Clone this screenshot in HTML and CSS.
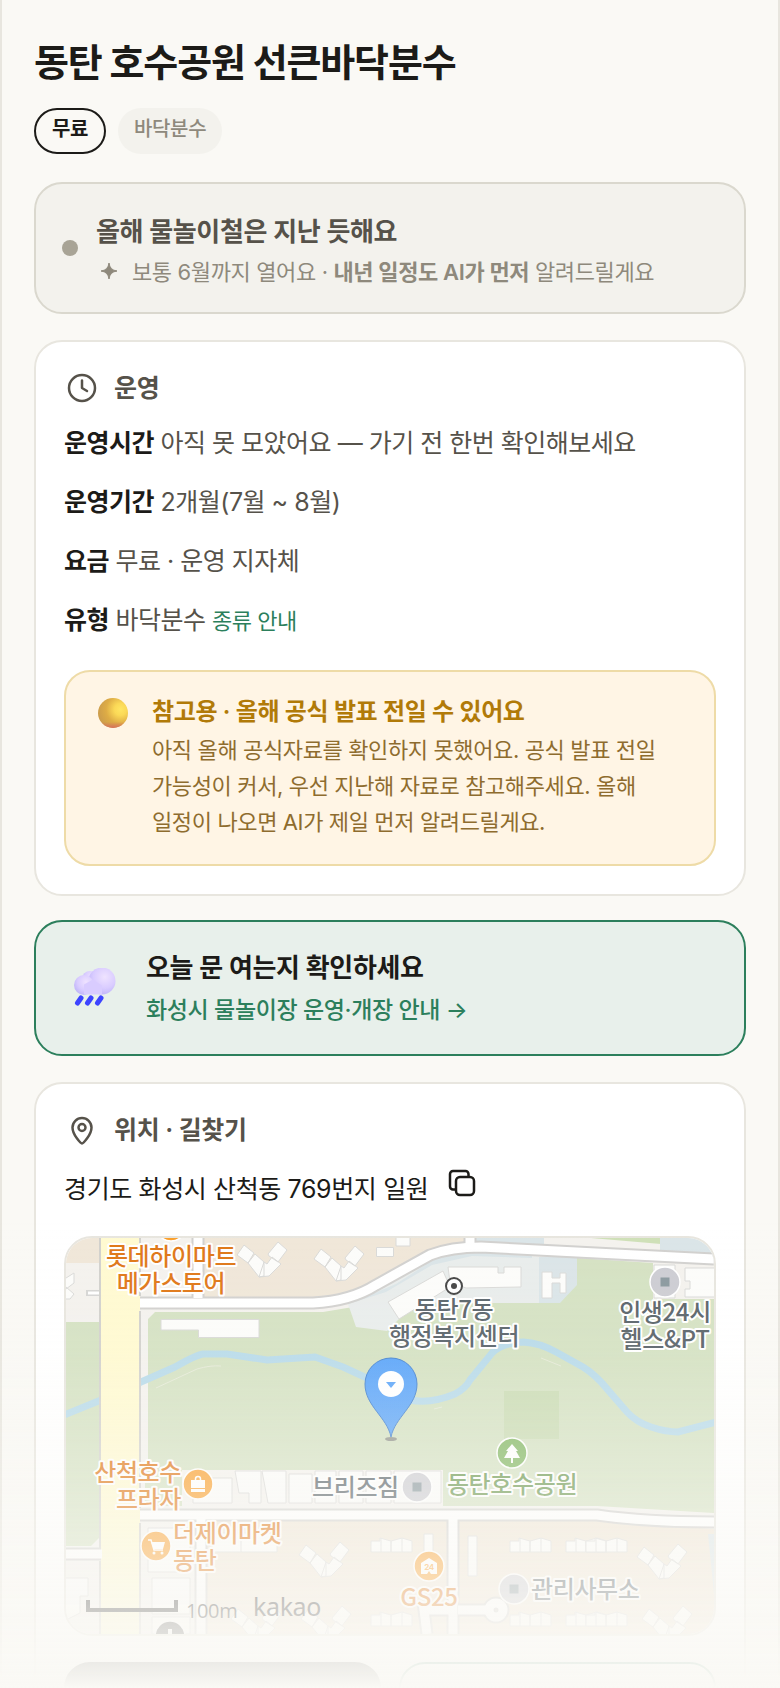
FILE: index.html
```html
<!DOCTYPE html>
<html lang="ko">
<head>
  <meta charset="UTF-8">
  <title>동탄 호수공원 선큰바닥분수</title>
  <meta name="viewport" content="width=device-width, initial-scale=1.0">
  <link rel="stylesheet" href="styles.css">
</head>
<body>
  <main class="app">
    <h1 class="title">동탄 호수공원 선큰바닥분수</h1>
    <div class="chips">
      <span class="chip chip-free">무료</span>
      <span class="chip">바닥분수</span>
    </div>

    <section class="status">
      <span class="status-dot"></span>
      <div class="status-body">
        <p class="status-title">올해 물놀이철은 지난 듯해요</p>
        <p class="status-sub">
          <svg class="spark" viewBox="0 0 16 16" aria-hidden="true"><path d="M8 0Q8.800 7.200 16 8Q8.800 8.800 8 16Q7.200 8.800 0 8Q7.200 7.200 8 0Z" fill="currentColor" stroke="currentColor"/></svg>
          <span>보통 6월까지 열어요 · <b>내년 일정도 AI가 먼저</b> 알려드릴게요</span>
        </p>
      </div>
    </section>

    <section class="card">
      <h2 class="card-head">
        <svg class="head-icon" viewBox="0 0 36 36" aria-hidden="true"><circle cx="18" cy="18" r="13"/><path d="M18 10.500V18l5 3"/></svg>
        운영
      </h2>
      <div class="rows">
        <p class="row"><b>운영시간</b> 아직 못 모았어요 — 가기 전 한번 확인해보세요</p>
        <p class="row"><b>운영기간</b> 2개월(7월 ~ 8월)</p>
        <p class="row"><b>요금</b> 무료 · 운영 지자체</p>
        <p class="row"><b>유형</b> 바닥분수 <a href="#">종류 안내</a></p>
      </div>
      <div class="notice">
        <svg class="ball" viewBox="0 0 30 30" aria-hidden="true">
          <defs>
            <radialGradient id="ball" cx=".75" cy=".38" r=".8"><stop offset="0" stop-color="#ffe562"/><stop offset=".25" stop-color="#fbd957"/><stop offset=".6" stop-color="#deac45"/><stop offset="1" stop-color="#c99a4c"/></radialGradient>
            <linearGradient id="ballEdge" x1="0" y1="0" x2="0" y2="1"><stop offset=".8" stop-color="#d8705c" stop-opacity="0"/><stop offset="1" stop-color="#d8705c"/></linearGradient>
          </defs>
          <circle cx="15" cy="15" r="15" fill="url(#ball)"/><circle cx="15" cy="15" r="15" fill="url(#ballEdge)"/>
        </svg>
        <div>
          <p class="notice-title">참고용 · 올해 공식 발표 전일 수 있어요</p>
          <p class="notice-text">아직 올해 공식자료를 확인하지 못했어요. 공식 발표 전일 가능성이 커서, 우선 지난해 자료로 참고해주세요. 올해 일정이 나오면 AI가 제일 먼저 알려드릴게요.</p>
        </div>
      </div>
    </section>

    <a class="check" href="#">
      <svg class="cloud" viewBox="-1 3 44 44" aria-hidden="true">
        <defs>
          <radialGradient id="puff" cx=".6" cy=".35" r=".7"><stop offset="0" stop-color="#efe3ff"/><stop offset=".6" stop-color="#d9ccff"/><stop offset="1" stop-color="#bdb2f8"/></radialGradient>
        </defs>
        <g fill="url(#puff)"><circle cx="17" cy="14" r="8"/><circle cx="29" cy="16" r="13.500"/><circle cx="11" cy="20" r="10"/></g>
        <path d="M11 29.500h18v-9l-9-6-9 5z" fill="#d9ccff"/>
        <path d="M8 33l-3.500 5M18 33l-3.500 5M28 33l-3.500 5" stroke="#3d44ff" stroke-width="5" stroke-linecap="round"/>
      </svg>
      <span>
        <strong class="check-title">오늘 문 여는지 확인하세요</strong>
        <span class="check-link">화성시 물놀이장 운영·개장 안내 →</span>
      </span>
    </a>

    <section class="card place">
      <h2 class="card-head">
        <svg class="head-icon" viewBox="0 0 36 36" aria-hidden="true"><path d="M18 31.500c-1 0-9.500-8.500-9.500-16a9.500 9.500 0 0 1 19 0c0 7.500-8.500 16-9.500 16z"/><circle cx="18" cy="15.500" r="3.500"/></svg>
        위치 · 길찾기
      </h2>
      <div class="address">
        <span>경기도 화성시 산척동 769번지 일원</span>
        <button type="button" class="copy" aria-label="복사">
          <svg viewBox="0 0 28 28" aria-hidden="true"><rect x="8" y="8" width="18" height="18" rx="4"/><path d="M8 20.500H5a3 3 0 0 1-3-3V5a3 3 0 0 1 3-3h12.500a3 3 0 0 1 3 3v3"/></svg>
        </button>
      </div>

      <div class="map">
        <svg viewBox="0 0 648 396" preserveAspectRatio="xMidYMid slice" role="img" aria-label="지도">
          <defs>
            <g id="tower" class="bldg"><path d="M0 15L7 5l10 8-6 10zM11 23l7-9 9 8v14l-5 1zM22 37l5-15 3 2 5-7 9 7-12 12zM31 14l10-12 9 8-9 12-9-6z"/></g>
            <g id="block" class="bldg"><path d="M0 5h9V2l11 3v11H0zM10 2v14M20 5l11-3 10 3v11H20zM31 2v14"/></g>
            <linearGradient id="pin" x1="0" y1="0" x2="0" y2="1"><stop offset="0" stop-color="#5ba5fa"/><stop offset="1" stop-color="#62a8f8"/></linearGradient>
          </defs>

          <!-- land -->
          <rect width="648" height="396" fill="#f4f2ee"/>
          <path d="M0 0h34v25H0zM138 0h261v7L364 14 314 44 284 55 247 59H138z" fill="#f0e7d9"/>
          <path d="M141 283H531L648 291V396H141z" fill="#f0e6d6"/>
          <path d="M82 81l7-7H257l30-5L511 20 587 25V61H648V275L531 268H377V232H82z" fill="#d5e2c3"/>
          <path d="M0 84H33V300l-8 8H0zM79 232h37v36H79z" fill="#d5e2c3"/>
          <path d="M525 0h70v6z" fill="#cfe0b8"/>
          <path d="M282 66l40-20 44-26 40-6 67 5v46H349l-28 28-31-4z" fill="#e9edec"/>
          <path d="M410 0h68v10h-68zM473 19h38v28L494 65H473zM594 0h54v18l-54-4zM282 66l48-20 40-26 36-6 60 4v2l-60-2-40 9-46 27z" fill="#dbe5e8"/>
          <path d="M438 153h55v48h-55z" fill="#cbdcb5"/>
          <path d="M642 296h6v60z" fill="#dbe5e8"/>

          <!-- stream -->
          <path class="stream" d="M-2 177L35 162 75 144 109 129Q130 117 137 116H161L201 122 249 119 277 129 301 140Q330 160 344 162Q365 166 389 156Q400 150 404 142L426 115Q436 105 457 104Q474 105 490 114L517 129Q530 137 542 152L561 174Q570 184 585 189Q600 194 612 194L650 184"/>
          <path d="M90 150L131 131Q145 127 155 128M475 120l20 8M368 171l8-2" fill="none" stroke="#e6ebd8"/>

          <!-- roads -->
          <g class="road-edge">
            <path d="M73 65H247Q285 63 310 47L364 17Q385 9 415 9L648 21"/>
            <path d="M73 277H531Q580 284 648 284M0 316H36M135 280V396M387 280V396M392 372H420M387 372H358L361 396M132-2V60M404-2V8"/>
            <circle cx="430" cy="372" r="7"/>
          </g>
          <path d="M20 55H36" stroke="#d6d6d4" stroke-width="6"/><path d="M22 55H36" stroke="#fff" stroke-width="3"/>
          <path d="M35 0H74V396H35z" fill="#fffad1"/>
          <path d="M34 0V310M34 323V396M74 0V58M74 73V270M74 285V396" stroke="#d2d1cd" stroke-width="2"/>
          <g class="road">
            <path d="M74 65H247Q285 63 310 47L364 17Q385 9 415 9L648 21"/>
            <path d="M74 277H531Q580 284 648 284M0 316H36M135 280V396M387 280V396M392 372H420M387 372H358L361 396M132-2V60M404-2V8"/>
            <circle cx="430" cy="372" r="7"/>
          </g>

          <!-- buildings -->
          <g class="bldg">
            <path d="M95 81.500H193V99.500H132.500V92H95zM310.500 9.500h17v9h-17zM330-2h14v10h-14zM0 40l8-5 0 10-8 6M0 49l8 7-4 5H0"/>
            <path d="M322 64L377 33 384 49 333 81zM382 29h50v6h6v-6h17v20l-55 1-16-6z"/>
            <path d="M476 34h10v6h8v-5h6v20h-6v-10h-8v15h-10zM588 27h21v33h-21zM619 30h30v29h-30v-8h5v-8h-5z"/>
            <path d="M127 240H166V265H127zM169 233H195V265H183V255h-10zM196 233H220V265H202zM223 236H246V265H223zM249 233H270V265H249zM273 233H297V265H273zM300 233H325V265H300zM328 233H375V265H328z"/>
            <path d="M82 290H124V334H82zM86 340H124V376H86zM86 379H124V396H86zM146 295H211V314H146zM175 296v18M0 340H22V358H14V375L0 382M358 296h9v20h-9zM402 298h9v40h-9z"/>
          </g>
          <use href="#tower" x="171" y="2"/><use href="#tower" x="248" y="6"/>
          <use href="#tower" x="233" y="302"/><use href="#tower" x="571" y="304"/><use href="#tower" x="165" y="366"/><use href="#tower" x="235" y="366"/><use href="#tower" x="576" y="366"/>
          <use href="#block" x="305" y="298"/><use href="#block" x="444" y="298"/><use href="#block" x="500" y="298"/><use href="#block" x="520" y="298"/>
          <use href="#block" x="305" y="372"/><use href="#block" x="444" y="372"/><use href="#block" x="500" y="372"/><use href="#block" x="520" y="372"/>

          <!-- markers -->
          <g stroke="#fff" stroke-width="1.500">
            <g fill="#fa9f2c"><circle cx="105" cy="-12" r="15"/><circle cx="132" cy="246" r="15"/><circle cx="90" cy="308" r="15"/><circle cx="363" cy="328" r="15"/></g>
            <g fill="#cdcdd3"><circle cx="599" cy="44" r="15"/><circle cx="351" cy="249" r="15"/><circle cx="448" cy="351" r="15"/></g>
            <circle cx="446" cy="215" r="15" fill="#84b865"/>
            <circle cx="104" cy="398" r="15" fill="#555"/>
          </g>
          <path d="M594.500 39.500h9v9h-9zM346.500 244.500h9v9h-9zM443.500 346.500h9v9h-9z" fill="#8b999f"/>
          <path d="M446 206l6 7h-2l4 7h-7v5h-2v-5h-7l4-7h-2zM125 242h14v8h-14zM125 251h14v3h-14zM355 325l8-5 8 5v11h-6l-2-3-2 3h-6zM102 391h4v5h-4z" fill="#fff"/>
          <path d="M129.500 242v-1a2.500 2.500 0 0 1 5 0v1M82 302h3l3 10h9" fill="none" stroke="#fff" stroke-width="1.500"/>
          <path d="M85 304h14l-2 7H88z" fill="#fff"/><circle cx="88" cy="315" r="1.500" fill="#fff"/><circle cx="96" cy="315" r="1.500" fill="#fff"/>
          <text x="363" y="332" class="tiny">24</text>
          <circle cx="388" cy="48" r="8" fill="#fff" stroke="#444" stroke-width="2"/><circle cx="388" cy="48" r="3" fill="#444"/>

          <!-- names -->
          <g class="name shop">
            <text x="105" y="27" class="mid">롯데하이마트</text><text x="105" y="54" class="mid">메가스토어</text>
            <text x="115" y="243" class="end">산척호수</text><text x="115" y="270" class="end">프라자</text>
            <text x="107" y="304">더제이마켓</text><text x="107" y="331">동탄</text>
            <text x="363" y="368" class="mid">GS25</text>
          </g>
          <g class="name">
            <text x="388" y="80" class="mid">동탄7동</text><text x="388" y="107" class="mid">행정복지센터</text>
            <text x="599" y="83" class="mid">인생24시</text><text x="599" y="110" class="mid">헬스&amp;PT</text>
            <text x="246" y="258">브리즈짐</text><text x="465" y="360">관리사무소</text>
          </g>
          <text x="446" y="255" class="name park mid">동탄호수공원</text>

          <!-- pin -->
          <ellipse cx="325" cy="201" rx="6" ry="2" fill="#777" opacity=".7"/>
          <path d="M325 199C321 179 299 168 299 146a26 26 0 0 1 52 0C351 168 329 179 325 199z" fill="url(#pin)" stroke="#4583d0"/>
          <circle cx="325" cy="146" r="13" fill="#fff"/><path d="M320 144h10l-5 6z" fill="#5ba5fa"/>

          <!-- scale -->
          <path d="M22 362V372H110V362" fill="none" stroke="#333" stroke-width="4"/>
          <text x="120" y="380" class="scale">100m</text>
          <text x="187" y="378" class="kakao">kakao</text>
        </svg>
      </div>

      <div class="actions">
        <button type="button" class="action action-main" aria-label="길찾기"></button>
        <button type="button" class="action" aria-label="위치"></button>
      </div>
    </section>
  </main>
  <div class="fade"></div>
</body>
</html>
```
FILE: styles.css
```css
* { box-sizing: border-box; }
body { margin: 0; background: #faf9f5; color: #1c1b18; font-family: Inter, "Noto Sans CJK KR", sans-serif; font-size: 25px; line-height: 40px; letter-spacing: -0.015em; word-break: keep-all; }
h1, h2, p { margin: 0; }
a { color: #2c7f5c; text-decoration: none; }
button { font: inherit; color: inherit; cursor: pointer; }
svg { display: block; }

.app { height: 100vh; overflow: hidden; padding: 34px 32px 0; border: solid #e8e6df; border-width: 0 2px; }
.title { font-size: 38px; line-height: 56px; font-weight: 700; letter-spacing: -0.03em; }

.chips { display: flex; gap: 12px; margin-top: 18px; }
.chip { height: 46px; padding: 6px 16px; border-radius: 23px; background: #f3f2ed; color: #8e897c; font-size: 20px; line-height: 30px; font-weight: 500; }
.chip-free { padding: 4px 16px; border: 2px solid #1c1b18; background: transparent; color: #1c1b18; font-weight: 600; }

/* 시즌 상태 */
.status { display: flex; align-items: center; gap: 18px; margin-top: 28px; padding: 20px 26px; border: 2px solid #dad8ce; border-radius: 28px; background: #f3f2ed; }
.status-dot { width: 16px; height: 16px; border-radius: 50%; background: #a8a496; }
.status-body { padding-top: 8px; }
.status-title { font-size: 26px; font-weight: 600; color: #56524a; }
.status-sub { display: flex; gap: 15px; padding-left: 5px; font-size: 22px; color: #8e897c; }
.status-sub b { font-weight: 600; }
.spark { width: 16px; height: 16px; margin-top: 11px; }

/* 카드 */
.card { margin-top: 26px; padding: 28px; border: 2px solid #e8e6df; border-radius: 28px; background: #fff; }
.card-head { display: flex; align-items: center; gap: 14px; font-size: 25px; line-height: 36px; font-weight: 600; color: #56524a; }
.head-icon { width: 36px; height: 36px; fill: none; stroke: currentColor; stroke-width: 2.5px; stroke-linecap: round; stroke-linejoin: round; }
.rows { display: grid; gap: 19px; margin-top: 17px; letter-spacing: -0.02em; color: #56524a; }
.row b { font-weight: 600; color: #1c1b18; }
.row a { font-size: 22px; }

.notice { display: flex; gap: 24px; margin-top: 29px; padding: 20px 32px 24px; border: 2px solid #eedba7; border-radius: 26px; background: #fff5e5; }
.ball { flex: none; width: 30px; height: 30px; margin-top: 6px; }
.notice-title { font-size: 24px; font-weight: 600; color: #b17a08; }
.notice-text { font-size: 22px; line-height: 36px; color: #8e6c2e; }

/* 개장 확인 */
.check { display: flex; align-items: center; gap: 30px; margin-top: 24px; padding: 26px 36px 22px; border: 2px solid #2c7f5c; border-radius: 28px; background: #e8f0eb; }
.cloud { width: 44px; height: 44px; }
.check-title { display: block; font-size: 26px; font-weight: 600; color: #1c1b18; }
.check-link { display: block; font-size: 23px; line-height: 44px; font-weight: 500; }

/* 위치 */
.address { display: flex; gap: 20px; margin-top: 21px; }
.copy { width: 28px; height: 28px; padding: 0; border: 0; background: none; }
.copy svg { fill: none; stroke: currentColor; stroke-width: 2.5px; }
.map { height: 400px; margin-top: 27px; overflow: hidden; border: 2px solid #e8e6df; border-radius: 28px; }
.map svg { width: 100%; height: 100%; }
.bldg { fill: #fcfcfa; stroke: #dadad8; }
.stream { fill: none; stroke: #b9dbea; stroke-width: 7px; }
.road, .road-edge { fill: none; stroke: #fff; stroke-width: 9px; }
.road-edge { stroke: #d2d1cf; stroke-width: 13px; }
.name { fill: #5a646a; stroke: #fff; stroke-width: 4px; stroke-linejoin: round; paint-order: stroke; font-family: "Noto Sans CJK KR", sans-serif; font-size: 24px; font-weight: 500; }
.shop { fill: #e07818; }
.park { fill: #6c9850; }
.mid { text-anchor: middle; }
.end { text-anchor: end; }
.tiny { fill: #fa9f2c; font-size: 8px; font-weight: 700; text-anchor: middle; }
.scale { fill: #333; font-family: "Open Sans", sans-serif; font-size: 20px; }
.kakao { fill: #333; font-family: "Noto Sans", sans-serif; font-size: 25px; }

.actions { display: grid; grid-template-columns: 1fr 1fr; gap: 18px; margin-top: 26px; }
.action { height: 88px; border: 2px solid #2c7f5c; border-radius: 26px; background: #fff; }
.action-main { border-color: #1c1b18; background: #1c1b18; }

.fade { position: fixed; right: 0; bottom: 0; left: 0; height: 468px; pointer-events: none; background: linear-gradient(#faf9f500, #faf9f514 28%, #faf9f561 55%, #faf9f5b3 79%, #faf9f5ee 94%, #faf9f5); }
```
